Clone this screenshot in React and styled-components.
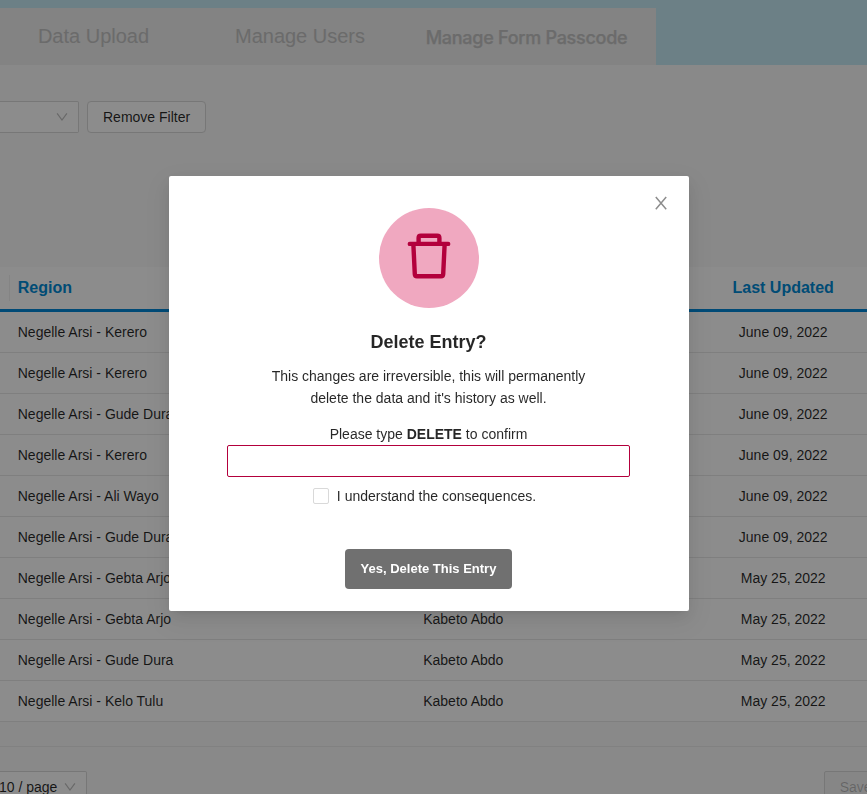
import React from "react";
import styled, { createGlobalStyle } from "styled-components";

const GlobalStyle = createGlobalStyle`
  *, *::before, *::after { box-sizing: border-box; }
  body {
    margin: 0;
    overflow: hidden;
    font-family: "Liberation Sans", Arial, sans-serif;
    font-size: 14px;
    line-height: 22px;
    color: rgba(0, 0, 0, 0.85);
  }
`;

const Page = styled.div`
  height: 794px;
  overflow: hidden;
  background: #f9f9f9;
`;

const TopBar = styled.header`
  display: flex;
  height: 65px;
  padding-top: 8px;
  background: #c5e9f4;
`;

const Tab = styled.div`
  flex: none;
  display: flex;
  align-items: center;
  justify-content: center;
  width: ${(p) => p.$width}px;
  padding: ${(p) => (p.$strong ? "3px 16px 0 0" : "0 0 2px")};
  background: #eeeeee;
  color: #c3c3c3;
  font-family: ${(p) => (p.$strong ? "Inter, sans-serif" : "inherit")};
  font-size: ${(p) => (p.$strong ? 18 : 20)}px;
  font-weight: ${(p) => (p.$strong ? 500 : 400)};
  letter-spacing: ${(p) => (p.$strong ? "-0.27px" : "normal")};
  -webkit-text-stroke: ${(p) => (p.$strong ? "0.25px" : "0")};
  white-space: nowrap;
`;

const Filters = styled.div`
  display: flex;
  gap: 8px;
  height: 202px;
  padding-top: 36px;
`;

const Select = styled.div`
  display: flex;
  align-items: center;
  justify-content: flex-end;
  gap: 6.6px;
  height: 32px;
  width: ${(p) => p.$width}px;
  padding-right: 10px;
  border: 1px solid #d9d9d9;
  border-left: 0;
  border-radius: 0 2px 2px 0;
  background: #fff;
  white-space: nowrap;
  color: rgba(0, 0, 0, 0.85);
  svg { flex: none; }
`;

const Button = styled.button`
  height: 32px;
  padding: 0 15px;
  border: 1px solid #d9d9d9;
  border-radius: ${(p) => (p.disabled ? 2 : 4)}px;
  background: ${(p) => (p.disabled ? "#f5f5f5" : "#fff")};
  color: ${(p) => (p.disabled ? "rgba(0,0,0,0.25)" : "rgba(0,0,0,0.85)")};
  font: inherit;
  white-space: nowrap;
`;

const columns = "9px 397.2px 293px 168px";

const TableHead = styled.div`
  display: grid;
  grid-template-columns: ${columns};
  align-items: center;
  height: 45px;
  border-bottom: 3px solid #0088d8;
  background: #fff;
  color: #008ad6;
  font-size: 16px;
  font-weight: 700;
`;

const Divider = styled.div`
  height: 26px;
  border-right: 1px solid #f0f0f0;
  width: 10px;
`;

const Row = styled.div`
  display: grid;
  grid-template-columns: ${columns};
  align-items: center;
  height: 41px;
  border-bottom: 1px solid #e8e8e8;
  background: #fff;
`;

const Cell = styled.div`
  padding-left: ${(p) => (p.$center ? 0 : p.$indent || 8.75)}px;
  text-align: ${(p) => (p.$center ? "center" : "left")};
`;

const Spacer = styled.div`
  height: 25px;
  border-bottom: 1px solid #ececec;
`;

const Footer = styled.footer`
  display: flex;
  justify-content: space-between;
  width: 887.6px;
  padding-top: 24px;
`;

const Mask = styled.div`
  position: fixed;
  inset: 0;
  display: flex;
  align-items: flex-start;
  padding: 176px 0 0 169px;
  background: rgba(0, 0, 0, 0.45);
`;

const Modal = styled.section`
  position: relative;
  display: flex;
  flex-direction: column;
  align-items: center;
  width: 520px;
  height: 435px;
  padding: 32px 1px 22px 0;
  border-radius: 2px;
  background: #fff;
  text-align: center;
  box-shadow: 0 3px 6px -4px rgba(0, 0, 0, 0.12), 0 6px 16px 0 rgba(0, 0, 0, 0.08),
    0 9px 28px 8px rgba(0, 0, 0, 0.05);
`;

const CloseButton = styled.button`
  position: absolute;
  top: 19px;
  right: 20px;
  width: 16px;
  height: 16px;
  padding: 0;
  border: 0;
  background: none;
  color: rgba(0, 0, 0, 0.45);
  svg { display: block; }
`;

const IconCircle = styled.div`
  width: 100px;
  height: 100px;
  margin-left: 1px;
  border-radius: 50%;
  background: #f0a8c0;
  svg { display: block; }
`;

const Title = styled.h2`
  margin: 20px 0 0;
  font-size: 18px;
  line-height: 28px;
  font-weight: 700;
`;

const Message = styled.p`
  width: 330px;
  margin: 9px 0 0;
`;

const Label = styled.label`
  margin-top: 14px;
`;

const Input = styled.input`
  width: 403px;
  height: 32px;
  padding: 4px 11px;
  border: 1px solid #b3003c;
  border-radius: 2px;
  outline: 0;
`;

const Consent = styled.label`
  display: flex;
  align-items: center;
  gap: 8px;
  margin: 8px 8px 0 0;
`;

const Checkbox = styled.span`
  width: 16px;
  height: 16px;
  border: 1px solid #d9d9d9;
  border-radius: 2px;
`;

const ConfirmButton = styled.button`
  width: 167px;
  height: 40px;
  margin-top: auto;
  padding: 0 0 2px;
  border: 0;
  border-radius: 4px;
  background: #707070;
  color: #fff;
  font: 700 13px "Liberation Sans", Arial, sans-serif;
  white-space: nowrap;
`;

const Arrow = () => (
  <svg width="12" height="12" viewBox="0 0 12 12" fill="none" stroke="#bfbfbf" strokeWidth="1.2">
    <path d="M1.1 2.4 6 9.1l4.9-6.7" />
  </svg>
);

const rows = [
  ["Negelle Arsi - Kerero", "June 09, 2022"],
  ["Negelle Arsi - Kerero", "June 09, 2022"],
  ["Negelle Arsi - Gude Dura", "June 09, 2022"],
  ["Negelle Arsi - Kerero", "June 09, 2022"],
  ["Negelle Arsi - Ali Wayo", "June 09, 2022"],
  ["Negelle Arsi - Gude Dura", "June 09, 2022"],
  ["Negelle Arsi - Gebta Arjo", "May 25, 2022"],
  ["Negelle Arsi - Gebta Arjo", "May 25, 2022", "Kabeto Abdo"],
  ["Negelle Arsi - Gude Dura", "May 25, 2022", "Kabeto Abdo"],
  ["Negelle Arsi - Kelo Tulu", "May 25, 2022", "Kabeto Abdo"],
];

export default function App() {
  return (
    <>
      <GlobalStyle />
      <Page>
        <TopBar>
          <Tab $width={187}>Data Upload</Tab>
          <Tab $width={226}>Manage Users</Tab>
          <Tab $width={243} $strong>Manage Form Passcode</Tab>
        </TopBar>
        <Filters>
          <Select $width={79}><Arrow /></Select>
          <Button>Remove Filter</Button>
        </Filters>
        <TableHead>
          <Divider />
          <Cell>Region</Cell>
          <Cell />
          <Cell $center>Last Updated</Cell>
        </TableHead>
        {rows.map(([region, date, submitter], i) => (
          <Row key={i}>
            <span />
            <Cell>{region}</Cell>
            <Cell $indent={17}>{submitter}</Cell>
            <Cell $center>{date}</Cell>
          </Row>
        ))}
        <Spacer />
        <Footer>
          <Select $width={87}>10 / page <Arrow /></Select>
          <Button disabled>Save</Button>
        </Footer>
      </Page>
      <Mask>
        <Modal role="dialog">
          <CloseButton aria-label="Close">
            <svg width="16" height="16" viewBox="0 0 16 16" fill="none" stroke="currentColor" strokeWidth="1.5">
              <path d="M2.8 1.9 13.2 14.2M13.2 1.9 2.8 14.2" />
            </svg>
          </CloseButton>
          <IconCircle>
            <svg width="100" height="100" viewBox="0 0 100 100" fill="none" stroke="#b3003c" strokeWidth="4.4" strokeLinecap="round" strokeLinejoin="round">
              <path d="M30.8 35.9h38.4M39.6 35v-5q0-2.2 2.2-2.2h16.4q2.2 0 2.2 2.2v5M34.4 37l1.4 29.1q.1 2.1 2.2 2.1h24q2.1 0 2.2-2.1L65.6 37" />
            </svg>
          </IconCircle>
          <Title>Delete Entry?</Title>
          <Message>This changes are irreversible, this will permanently delete the data and it's history as well.</Message>
          <Label htmlFor="confirm">Please type <b>DELETE</b> to confirm</Label>
          <Input id="confirm" />
          <Consent><Checkbox />I understand the consequences.</Consent>
          <ConfirmButton>Yes, Delete This Entry</ConfirmButton>
        </Modal>
      </Mask>
    </>
  );
}
